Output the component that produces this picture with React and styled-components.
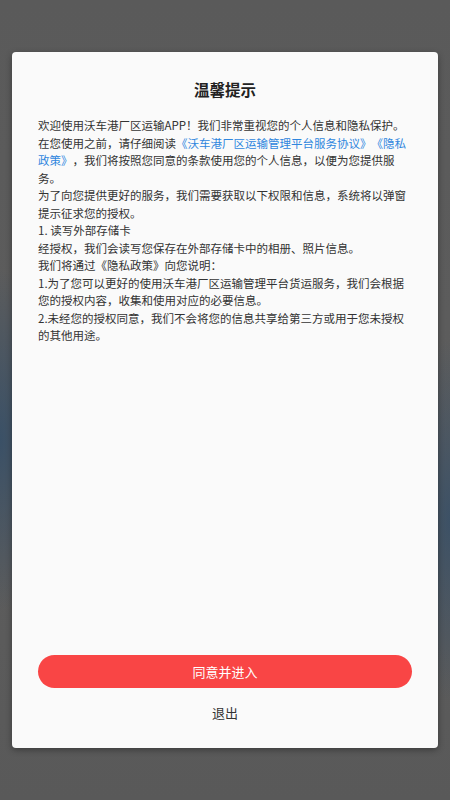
import React from 'react'
import styled, { createGlobalStyle } from 'styled-components'

const GlobalStyle = createGlobalStyle`
  html, body {
    margin: 0;
    padding: 0;
  }
  body {
    font-family: "Noto Sans CJK SC", "Noto Sans", sans-serif;
  }
`;

const Backdrop = styled.div`
  width: 450px;
  height: 800px;
  box-sizing: border-box;
  padding: 52px 12px;
  background:
    radial-gradient(ellipse 60px 170px at 0px 440px, rgba(52, 78, 104, 0.85), rgba(52, 78, 104, 0) 100%),
    radial-gradient(ellipse 50px 180px at 450px 520px, rgba(52, 78, 104, 0.8), rgba(52, 78, 104, 0) 100%),
    linear-gradient(#5a5a5a, #5d5d5d 60%, #595959);
`;

const Card = styled.div`
  height: 100%;
  box-sizing: border-box;
  background: #fafafa;
  border-radius: 4px;
  box-shadow: 0 2px 6px rgba(0, 0, 0, 0.35);
  display: flex;
  flex-direction: column;
  padding: 27px 26px 25px;
`;

const Title = styled.h2`
  margin: 0;
  font-size: 15.5px;
  line-height: 20px;
  font-weight: 700;
  color: #222;
  text-align: center;
`;

const Body = styled.div`
  margin-top: 18px;
  font-size: 11.5px;
  line-height: 17.5px;
  color: #333;
  text-spacing-trim: space-all;
`;

const Para = styled.p`
  margin: 0;
`;

const Link = styled.span`
  color: #2f86de;
`;

const Footer = styled.div`
  margin-top: auto;
  display: flex;
  flex-direction: column;
  align-items: center;
`;

const AgreeButton = styled.button`
  width: 100%;
  height: 33px;
  border: none;
  border-radius: 17px;
  background: #f94545;
  color: #fff;
  font-family: inherit;
  font-size: 13px;
  cursor: pointer;
`;

const ExitButton = styled.button`
  margin-top: 15px;
  border: none;
  background: none;
  padding: 0;
  font-family: inherit;
  font-size: 13px;
  line-height: 20px;
  color: #333;
  cursor: pointer;
`;

export default function App() {
  return (
    <Backdrop>
      <GlobalStyle />
      <Card>
        <Title>温馨提示</Title>
        <Body>
          <Para>欢迎使用沃车港厂区运输APP！我们非常重视您的个人信息和隐私保护。</Para>
          <Para>
            在您使用之前，请仔细阅读<Link>《沃车港厂区运输管理平台服务协议》《隐私政策》</Link>，我们将按照您同意的条款使用您的个人信息，以便为您提供服务。
          </Para>
          <Para>为了向您提供更好的服务，我们需要获取以下权限和信息，系统将以弹窗提示征求您的授权。</Para>
          <Para>1. 读写外部存储卡</Para>
          <Para>经授权，我们会读写您保存在外部存储卡中的相册、照片信息。</Para>
          <Para>我们将通过《隐私政策》向您说明：</Para>
          <Para>1.为了您可以更好的使用沃车港厂区运输管理平台货运服务，我们会根据您的授权内容，收集和使用对应的必要信息。</Para>
          <Para>2.未经您的授权同意，我们不会将您的信息共享给第三方或用于您未授权的其他用途。</Para>
        </Body>
        <Footer>
          <AgreeButton>同意并进入</AgreeButton>
          <ExitButton>退出</ExitButton>
        </Footer>
      </Card>
    </Backdrop>
  )
}
